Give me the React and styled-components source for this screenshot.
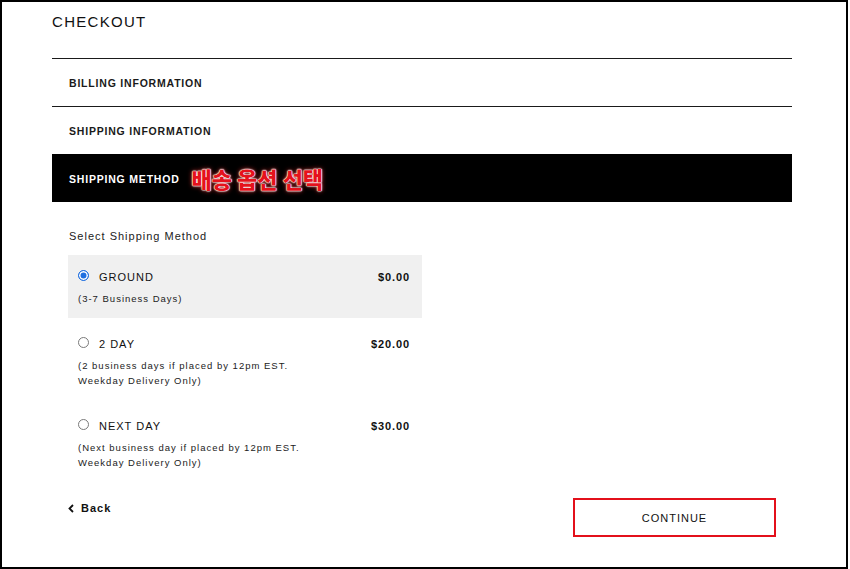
import React, { useState } from 'react';
import styled, { createGlobalStyle } from 'styled-components';

const GlobalStyle = createGlobalStyle`
  html, body {
    margin: 0;
    padding: 0;
    background: #fff;
  }
  body {
    font-family: "Liberation Sans", Arial, sans-serif;
    color: #111;
  }
`;

const Frame = styled.div`
  box-sizing: border-box;
  width: 848px;
  height: 569px;
  border: 2px solid #000;
  padding: 0 0 0 50px;
  overflow: hidden;
`;

const Content = styled.div`
  width: 740px;
`;

const Title = styled.h1`
  margin: 0;
  height: 56px;
  padding-top: 11px;
  box-sizing: border-box;
  font-size: 15px;
  font-weight: 500;
  letter-spacing: 1.3px;
  line-height: 18px;
  color: #111;
`;

const Step = styled.div`
  display: flex;
  align-items: center;
  height: 48px;
  box-sizing: border-box;
  padding-left: 17px;
  border-top: 1px solid ${({ active }) => (active ? '#000' : '#1a1a1a')};
  background: ${({ active }) => (active ? '#000' : '#fff')};
  color: ${({ active }) => (active ? '#fff' : '#1a1a1a')};
`;

const StepLabel = styled.span`
  font-size: 10.5px;
  font-weight: 700;
  letter-spacing: 0.8px;
`;

const Callout = styled.span`
  margin-left: 12px;
  margin-top: -2px;
  font-family: "Noto Sans CJK KR", sans-serif;
  font-size: 22px;
  font-weight: 900;
  color: #e5121c;
  text-shadow: 0 0 1px #fff, 0 0 1px #fff, 0 0 1.5px #fff, 0 0 2px #fff, 0 0 5px #ff3030;
  letter-spacing: 0;
`;

const Body = styled.div`
  padding: 27px 0 0 16px;
`;

const SectionTitle = styled.div`
  font-size: 11px;
  letter-spacing: 1px;
  line-height: 14px;
  color: #222;
  padding-left: 1px;
  margin-bottom: 12px;
`;

const Options = styled.div`
  display: flex;
  flex-direction: column;
  gap: 4px;
  width: 354px;
`;

const Option = styled.label`
  display: block;
  padding: 15px 12px 12px 10px;
  background: ${({ selected }) => (selected ? '#f0f0f0' : 'transparent')};
  cursor: pointer;
`;

const OptionHead = styled.div`
  display: flex;
  align-items: center;
  height: 14px;
`;

const Radio = styled.span`
  width: 11px;
  height: 11px;
  box-sizing: border-box;
  border-radius: 50%;
  border: 1px solid ${({ checked }) => (checked ? '#1f6fe0' : '#7a7a7a')};
  background: ${({ checked }) => (checked ? '#1f6fe0' : '#fff')};
  box-shadow: ${({ checked }) => (checked ? 'inset 0 0 0 1.5px #fff' : 'none')};
  margin-top: -3px;
  margin-right: 10px;
  flex-shrink: 0;
`;

const OptionName = styled.span`
  flex: 1;
  font-size: 11px;
  font-weight: 500;
  letter-spacing: 1px;
  color: #111;
`;

const Price = styled.span`
  font-size: 11px;
  font-weight: 700;
  letter-spacing: 0.9px;
  color: #111;
`;

const OptionNote = styled.div`
  margin-top: 7px;
  font-size: 9.5px;
  line-height: 15px;
  letter-spacing: 1px;
  color: #222;
`;

const Footer = styled.div`
  display: flex;
  justify-content: space-between;
  align-items: flex-start;
  width: 708px;
  margin-top: 16px;
`;

const BackLink = styled.a`
  display: flex;
  align-items: center;
  gap: 7px;
  margin-top: 4px;
  font-size: 11px;
  font-weight: 600;
  letter-spacing: 1px;
  color: #111;
  text-decoration: none;
  cursor: pointer;
`;

const ContinueButton = styled.button`
  width: 203px;
  height: 39px;
  box-sizing: border-box;
  border: 2px solid #e3101b;
  background: #fff;
  font-family: "Liberation Sans", Arial, sans-serif;
  font-size: 11px;
  font-weight: 500;
  letter-spacing: 1px;
  color: #111;
  cursor: pointer;
`;

const methods = [
  { id: 'ground', name: 'GROUND', price: '$0.00', note: ['(3-7 Business Days)'] },
  {
    id: '2day',
    name: '2 DAY',
    price: '$20.00',
    note: ['(2 business days if placed by 12pm EST.', 'Weekday Delivery Only)'],
  },
  {
    id: 'nextday',
    name: 'NEXT DAY',
    price: '$30.00',
    note: ['(Next business day if placed by 12pm EST.', 'Weekday Delivery Only)'],
  },
];

const App = () => {
  const [method, setMethod] = useState('ground');

  return (
    <>
      <GlobalStyle />
      <Frame>
        <Content>
          <Title>CHECKOUT</Title>
          <Step>
            <StepLabel>BILLING INFORMATION</StepLabel>
          </Step>
          <Step>
            <StepLabel>SHIPPING INFORMATION</StepLabel>
          </Step>
          <Step active>
            <StepLabel>SHIPPING METHOD</StepLabel>
            <Callout>배송 옵션 선택</Callout>
          </Step>

          <Body>
            <SectionTitle>Select Shipping Method</SectionTitle>
            <Options>
              {methods.map((m) => (
                <Option key={m.id} selected={method === m.id} onClick={() => setMethod(m.id)}>
                  <OptionHead>
                    <Radio checked={method === m.id} />
                    <OptionName>{m.name}</OptionName>
                    <Price>{m.price}</Price>
                  </OptionHead>
                  <OptionNote>
                    {m.note.map((line) => (
                      <div key={line}>{line}</div>
                    ))}
                  </OptionNote>
                </Option>
              ))}
            </Options>

            <Footer>
              <BackLink>
                <svg width="6" height="9" viewBox="0 0 6 9">
                  <path d="M5 1 L1.5 4.5 L5 8" fill="none" stroke="#111" strokeWidth="1.8" />
                </svg>
                Back
              </BackLink>
              <ContinueButton>CONTINUE</ContinueButton>
            </Footer>
          </Body>
        </Content>
      </Frame>
    </>
  );
};

export default App;
